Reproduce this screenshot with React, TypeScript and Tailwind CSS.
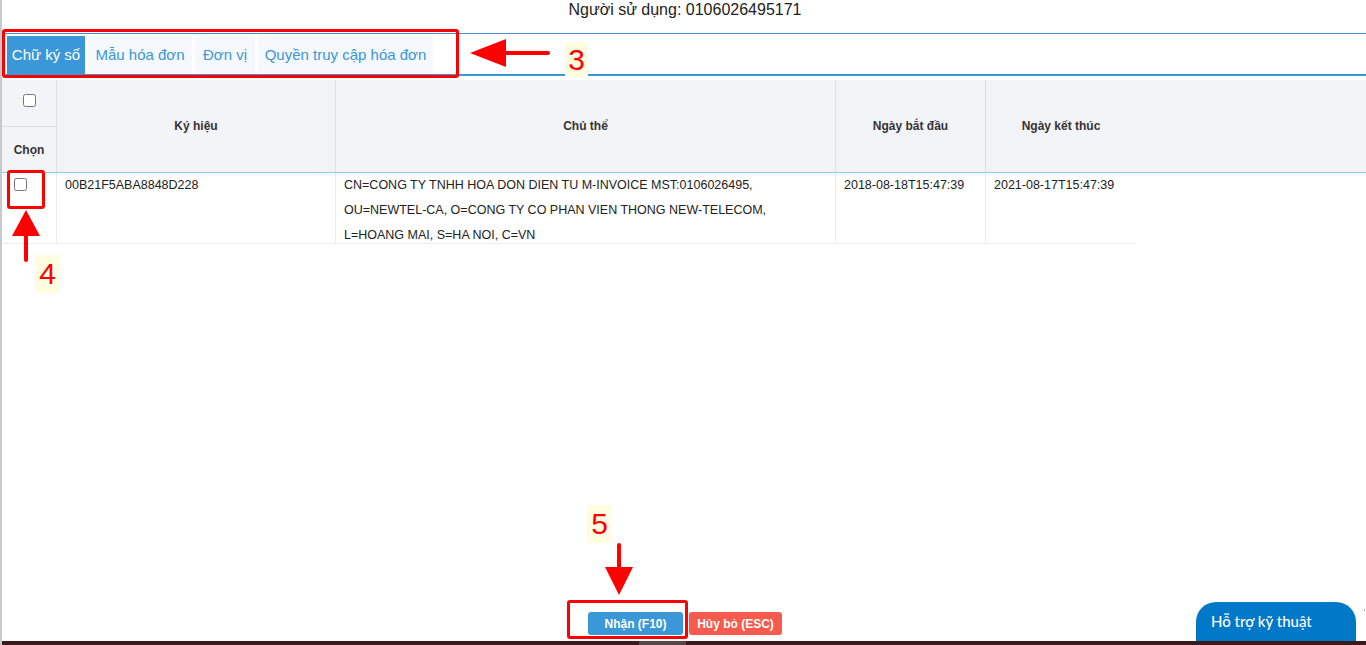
import React from 'react';

const tabs = ['Chữ ký số', 'Mẫu hóa đơn', 'Đơn vị', 'Quyền truy cập hóa đơn'];
const tabW = ['w-[78px]', 'w-[104px]', 'w-[60px]', 'w-[175px]'];

const Check: React.FC = () => (
  <input type="checkbox" className="w-[13px] h-[13px] m-0 accent-white" />
);

const App: React.FC = () => {
  return (
    <div
      className="relative h-[645px] w-[1366px] flex bg-white overflow-hidden text-[#333]"
      style={{ fontFamily: '"Liberation Sans", Arial, sans-serif' }}
    >
      <div className="w-[2px] bg-[#c6cacf]" />
      <div className="flex-1 flex flex-col">
        <div className="h-[34px] border-b border-[#4a8fc9] flex justify-center pl-[2px] pt-[1px] text-[16px] leading-[18px] text-[#222]">
          Người sử dụng: 0106026495171
        </div>
        <div className="flex gap-[3px] pl-[5px] pt-[2px] h-[42px] border-b-2 border-[#3a97d8]">
          {tabs.map((t, i) => (
            <div
              key={t}
              className={
                'h-[38px] flex items-center justify-center text-[15px] ' +
                tabW[i] +
                (i === 0 ? ' bg-[#3a97d8] text-white' : ' bg-[#f5f9fd] text-[#3a97d8]')
              }
            >
              {t}
            </div>
          ))}
        </div>

        {/* table */}
        <div className="mt-[4px] bg-[#f3f4f8] border-b border-[#8ccbe6] flex">
          <div className="w-[55px] flex flex-col border-r border-[#dcdfe6]">
            <div className="h-[47px] flex items-center justify-center pb-[5px] border-b border-[#dcdfe6]">
              <Check />
            </div>
            <div className="h-[45px] flex items-center justify-center text-[12px] font-bold text-[#333]">
              Chọn
            </div>
          </div>
          <div className="w-[279px] border-r border-[#dcdfe6] flex items-center justify-center text-[12px] font-bold">
            Ký hiệu
          </div>
          <div className="w-[500px] border-r border-[#dcdfe6] flex items-center justify-center text-[12px] font-bold">
            Chủ thể
          </div>
          <div className="w-[150px] border-r border-[#dcdfe6] flex items-center justify-center text-[12px] font-bold">
            Ngày bắt đầu
          </div>
          <div className="w-[150px] flex items-center justify-center text-[12px] font-bold">
            Ngày kết thúc
          </div>
        </div>
        <div className="w-[1134px] flex h-[71px] border-b border-[#ececec] text-[12.5px] leading-[25px] text-[#222]">
          <div className="w-[55px] border-r border-[#ececec] pl-[12px] pt-[2px]">
            <Check />
          </div>
          <div className="w-[279px] border-r border-[#ececec] pl-[8px]">00B21F5ABA8848D228</div>
          <div className="w-[500px] border-r border-[#ececec] pl-[8px]">
            <div>CN=CONG TY TNHH HOA DON DIEN TU M-INVOICE MST:0106026495,</div>
            <div>OU=NEWTEL-CA, O=CONG TY CO PHAN VIEN THONG NEW-TELECOM,</div>
            <div>L=HOANG MAI, S=HA NOI, C=VN</div>
          </div>
          <div className="w-[150px] border-r border-[#ececec] pl-[8px]">2018-08-18T15:47:39</div>
          <div className="w-[150px] pl-[8px]">2021-08-17T15:47:39</div>
        </div>

        <div className="flex-1" />
        <div className="flex justify-center gap-[6px] pb-[6px] pl-[2px]">
          <button className="w-[95px] h-[23px] rounded-[3px] bg-[#3a97d8] text-white text-[12px] font-bold">
            Nhận (F10)
          </button>
          <button className="w-[93px] h-[23px] rounded-[3px] bg-[#f55b4f] text-white text-[12px] font-bold">
            Hủy bỏ (ESC)
          </button>
        </div>
        <div className="h-[4px] bg-[#3b1a1c] flex">
          <div className="ml-[637px] w-[47px] bg-[#5b4647]" />
        </div>
      </div>

      {/* support widget */}
      <div
        className="absolute left-[1196px] top-[602px] w-[160px] h-[39px] rounded-t-[20px] bg-[#0078c8] text-white text-[15px] pl-[15px] pt-[10px] leading-[18px]"
        style={{ fontFamily: 'Lato, "Open Sans", sans-serif', fontWeight: 500 }}
      >
        Hỗ trợ kỹ thuật
      </div>
      <div className="absolute left-[1364px] top-[609px] w-[1px] h-[2px] bg-[#aaa]" />

      {/* annotations */}
      <div className="absolute left-[2px] top-[29px] w-[457px] h-[49px] border-[3px] border-[#ff0000] rounded-[3px]" />
      <svg className="absolute left-[466px] top-[37px]" width="90" height="32">
        <polygon points="4,16 40,2 40,30" fill="#ff0000" />
        <rect x="38" y="14" width="46" height="4" rx="2" fill="#ff0000" />
      </svg>
      <div className="absolute left-[565px] top-[43px] w-[23px] h-[34px] bg-[#fffde0] text-[#ff0000] text-[30px] leading-[34px] text-center">
        3
      </div>

      <div className="absolute left-[7px] top-[170px] w-[38px] h-[39px] border-[3px] border-[#ff0000] rounded-[3px]" />
      <svg className="absolute left-[10px] top-[208px]" width="34" height="58">
        <polygon points="16,2 2,28 30,28" fill="#ff0000" />
        <rect x="14" y="26" width="4" height="28" rx="2" fill="#ff0000" />
      </svg>
      <div className="absolute left-[35px] top-[255px] w-[25px] h-[38px] bg-[#fffde0] text-[#ff0000] text-[30px] leading-[38px] text-center">
        4
      </div>

      <div className="absolute left-[587px] top-[505px] w-[25px] h-[38px] bg-[#fffde0] text-[#ff0000] text-[30px] leading-[38px] text-center">
        5
      </div>
      <svg className="absolute left-[603px] top-[543px]" width="34" height="56">
        <rect x="14" y="0" width="4" height="28" rx="2" fill="#ff0000" />
        <polygon points="2,24 30,24 16,52" fill="#ff0000" />
      </svg>
      <div className="absolute left-[567px] top-[600px] w-[121px] h-[39px] border-[3px] border-[#ff0000] rounded-[3px]" />
    </div>
  );
};

export default App;
